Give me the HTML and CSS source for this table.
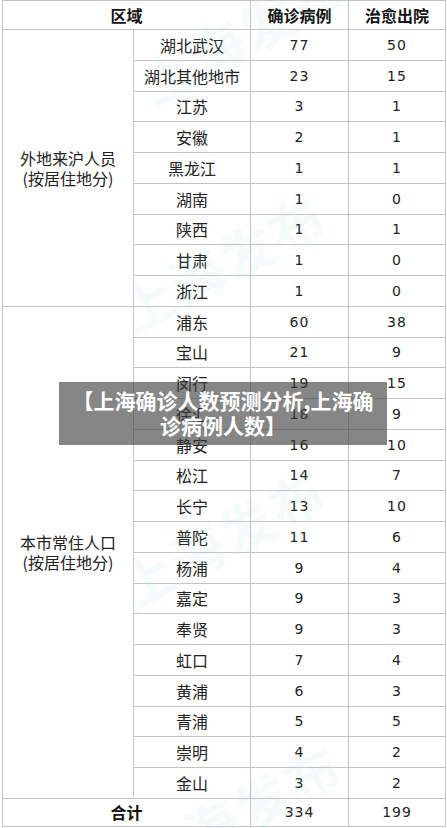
FILE: index.html
```html
<!DOCTYPE html>
<html lang="zh">
<head>
<meta charset="utf-8">
<link rel="stylesheet" href="styles.css">
</head>
<body>
<div class="page">
  <table class="data">
    <colgroup>
      <col class="c1"><col class="c2"><col class="c3"><col class="c4">
    </colgroup>
    <thead>
      <tr class="head"><th colspan="2">区域</th><th>确诊病例</th><th>治愈出院</th></tr>
    </thead>
    <tbody>
      <tr><td class="group" rowspan="9">外地来沪人员<br>(按居住地分)</td><td class="name">湖北武汉</td><td class="num">77</td><td class="num">50</td></tr>
      <tr><td class="name">湖北其他地市</td><td class="num">23</td><td class="num">15</td></tr>
      <tr><td class="name">江苏</td><td class="num">3</td><td class="num">1</td></tr>
      <tr><td class="name">安徽</td><td class="num">2</td><td class="num">1</td></tr>
      <tr><td class="name">黑龙江</td><td class="num">1</td><td class="num">1</td></tr>
      <tr><td class="name">湖南</td><td class="num">1</td><td class="num">0</td></tr>
      <tr><td class="name">陕西</td><td class="num">1</td><td class="num">1</td></tr>
      <tr><td class="name">甘肃</td><td class="num">1</td><td class="num">0</td></tr>
      <tr><td class="name">浙江</td><td class="num">1</td><td class="num">0</td></tr>
      <tr><td class="group" rowspan="16">本市常住人口<br>(按居住地分)</td><td class="name">浦东</td><td class="num">60</td><td class="num">38</td></tr>
      <tr><td class="name">宝山</td><td class="num">21</td><td class="num">9</td></tr>
      <tr><td class="name">闵行</td><td class="num">19</td><td class="num">15</td></tr>
      <tr><td class="name">徐汇</td><td class="num">18</td><td class="num">9</td></tr>
      <tr><td class="name">静安</td><td class="num">16</td><td class="num">10</td></tr>
      <tr><td class="name">松江</td><td class="num">14</td><td class="num">7</td></tr>
      <tr><td class="name">长宁</td><td class="num">13</td><td class="num">10</td></tr>
      <tr><td class="name">普陀</td><td class="num">11</td><td class="num">6</td></tr>
      <tr><td class="name">杨浦</td><td class="num">9</td><td class="num">4</td></tr>
      <tr><td class="name">嘉定</td><td class="num">9</td><td class="num">3</td></tr>
      <tr><td class="name">奉贤</td><td class="num">9</td><td class="num">3</td></tr>
      <tr><td class="name">虹口</td><td class="num">7</td><td class="num">4</td></tr>
      <tr><td class="name">黄浦</td><td class="num">6</td><td class="num">3</td></tr>
      <tr><td class="name">青浦</td><td class="num">5</td><td class="num">5</td></tr>
      <tr><td class="name">崇明</td><td class="num">4</td><td class="num">2</td></tr>
      <tr><td class="name">金山</td><td class="num">3</td><td class="num">2</td></tr>
    </tbody>
    <tfoot>
      <tr class="total"><th colspan="2">合计</th><td class="num">334</td><td class="num">199</td></tr>
    </tfoot>
  </table>

  <div class="wm wm1">上海发布</div>
  <div class="wm wm2">上海发布</div>
  <div class="wm wm3">上海发布</div>
  <div class="wm wm4">上海发布</div>

  <div class="caption">【上海确诊人数预测分析,上海确<br>诊病例人数】</div>
</div>
</body>
</html>
```
FILE: styles.css
```css
html, body {
  margin: 0;
  padding: 0;
  background: #ffffff;
}

.page {
  position: relative;
  width: 447px;
  height: 828px;
  overflow: hidden;
  padding: 0 0 0 2px;
  box-sizing: border-box;
  font-family: "Noto Sans CJK SC", "Noto Sans", sans-serif;
  color: #222;
}

.data {
  border-collapse: collapse;
  table-layout: fixed;
  width: 443px;
}

.c1 { width: 131px; }
.c2 { width: 117px; }
.c3 { width: 98px; }
.c4 { width: 97px; }

.data th,
.data td {
  border: 1px solid #c4c4c4;
  padding: 0;
  text-align: center;
  vertical-align: middle;
  line-height: 20px;
}

.data tbody tr {
  height: 30.76px;
}

.head {
  height: 29px;
}

.total {
  height: 28px;
}

.data th {
  font-size: 16px;
  font-weight: 700;
  color: #111;
}

.name {
  font-size: 16px;
}

.num {
  font-family: "DejaVu Sans", sans-serif;
  font-size: 14px;
  letter-spacing: 1px;
  color: #222;
}

.group {
  font-size: 16px;
  line-height: 21px;
  color: #222;
}

.wm {
  position: absolute;
  font-size: 54px;
  font-weight: 700;
  color: rgba(120, 195, 185, 0.07);
  transform: rotate(-28deg);
  white-space: nowrap;
  pointer-events: none;
  letter-spacing: 2px;
}

.wm1 { left: 130px; top: -6px; }
.wm2 { left: 110px; top: 222px; }
.wm3 { left: 110px; top: 497px; }
.wm4 { left: 125px; top: 772px; }

.caption {
  position: absolute;
  left: 59px;
  top: 382px;
  width: 328px;
  height: 63px;
  box-sizing: border-box;
  padding-top: 6px;
  background: rgba(60, 60, 60, 0.62);
  color: #ffffff;
  font-size: 21px;
  font-weight: 700;
  line-height: 25px;
  text-align: center;
}
```
